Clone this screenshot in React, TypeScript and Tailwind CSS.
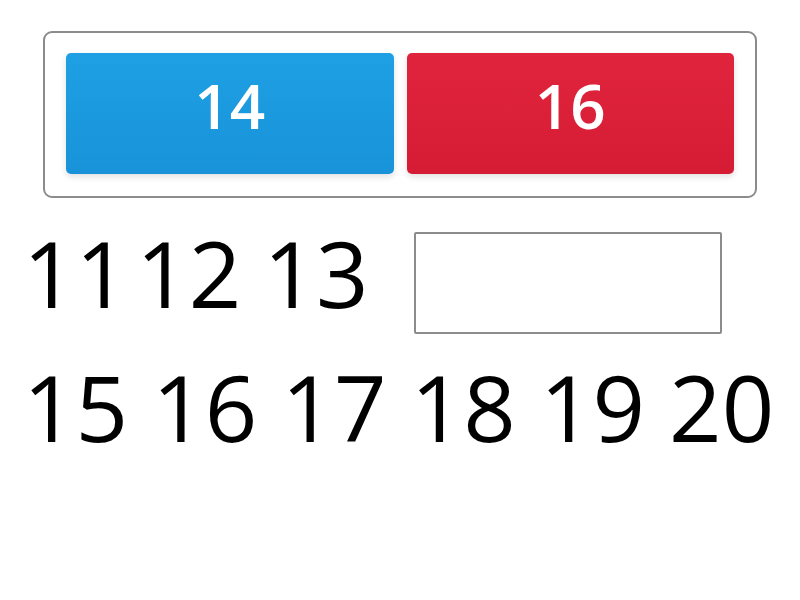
import React from 'react';

const choices = [
  { label: '14', tone: 'bg-gradient-to-b from-[#1fa0e4] to-[#1893d9]' },
  { label: '16', tone: 'bg-gradient-to-b from-[#e0243d] to-[#d61c34]' },
];

export default function App() {
  return (
    <div className="w-[800px] h-[600px] bg-white overflow-hidden" style={{ fontFamily: '"Open Sans", "Noto Sans", sans-serif' }}>
      {/* Answer choices */}
      <div className="pt-[31px] pl-[43px]">
        <div className="w-[714px] h-[167px] border-2 border-[#8c8c8c] rounded-[9px] px-[21px] pt-[20px] flex gap-[13px]">
          {choices.map(c => (
            <button
              key={c.label}
              className={`flex-1 h-[121px] pb-[18px] rounded-[5px] ${c.tone} shadow-[0_3px_6px_rgba(0,0,0,0.12)] text-white text-[62px] font-semibold leading-none flex items-center justify-center`}
            >
              {c.label}
            </button>
          ))}
        </div>
      </div>

      {/* Number sequence */}
      <div className="pl-[23px] text-black text-[92px] leading-none">
        <div className="flex items-center mt-[34px] h-[102px]">
          <span className="-mt-[21px]">11</span>
          <span className="ml-[8px] -mt-[21px]">12</span>
          <span className="ml-[22px] -mt-[21px]">13</span>
          <div className="ml-[45px] w-[308px] h-[102px] border-2 border-[#8c8c8c] rounded-[2px]" />
        </div>
        <div className="flex gap-[24px] mt-[27px]">
          {['15', '16', '17', '18', '19', '20'].map(n => (
            <span key={n}>{n}</span>
          ))}
        </div>
      </div>
    </div>
  );
}
